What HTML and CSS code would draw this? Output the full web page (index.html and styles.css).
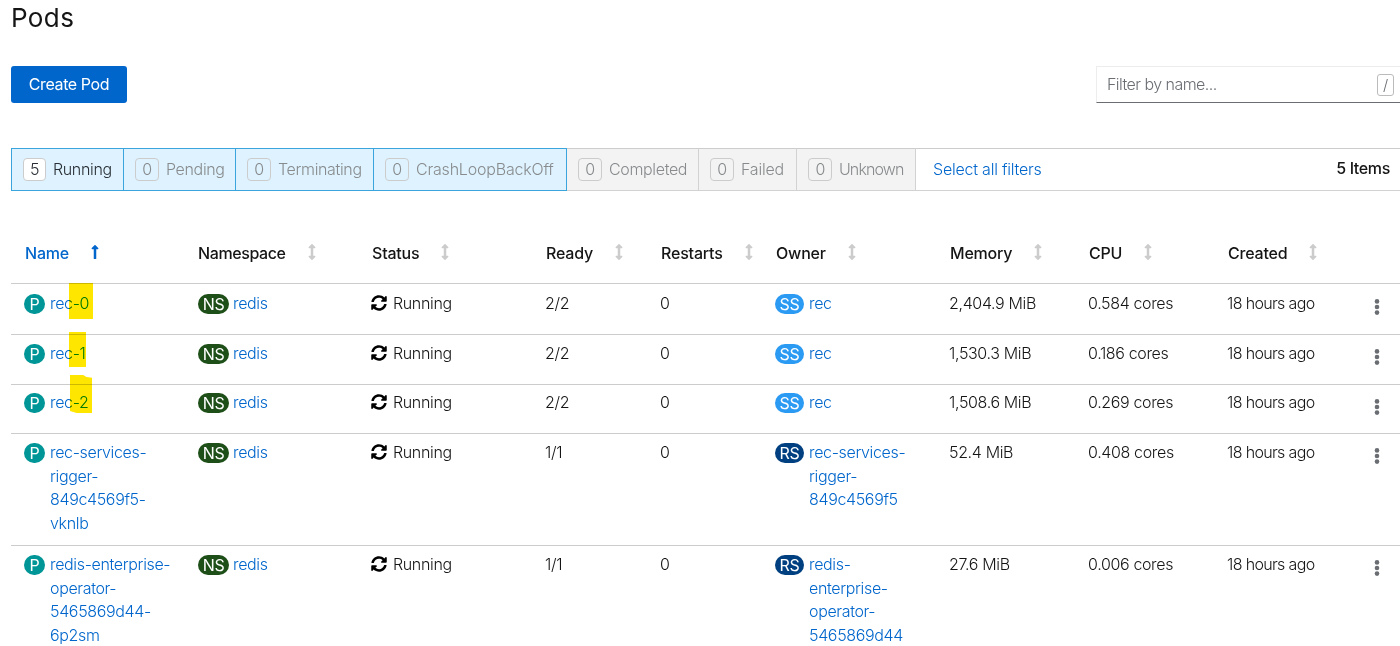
FILE: index.html
```
<!DOCTYPE html>
<html lang="en">
<head>
    <meta charset="UTF-8">
    <meta name="viewport" content="width=device-width, initial-scale=1.0">
    <title>Pods</title>
    <link rel="stylesheet" href="styles.css">
</head>
<body>
    <!-- Shared icons -->
    <svg class="icon-defs" width="0" height="0">
        <symbol id="sort" viewBox="0 0 256 512">
            <path d="M214.059 377.941H168V134.059h46.059c21.382 0 32.09-25.851 16.971-40.971L144.971 7.029c-9.373-9.373-24.568-9.373-33.941 0L24.971 93.088c-15.119 15.119-4.411 40.971 16.971 40.971H88v243.882H41.941c-21.382 0-32.09 25.851-16.971 40.971l86.059 86.059c9.373 9.373 24.568 9.373 33.941 0l86.059-86.059c15.12-15.119 4.412-40.971-16.97-40.971z"/>
        </symbol>
        <symbol id="sort-up" viewBox="0 0 256 512">
            <path d="M88 166.059V468c0 6.627 5.373 12 12 12h56c6.627 0 12-5.373 12-12V166.059h46.059c21.382 0 32.09-25.851 16.971-40.971l-86.059-86.059c-9.373-9.373-24.569-9.373-33.941 0l-86.059 86.059c-15.119 15.119-4.411 40.971 16.971 40.971H88z"/>
        </symbol>
        <symbol id="sync" viewBox="0 0 512 512">
            <path d="M370.72 133.28C339.458 104.008 298.888 87.962 255.848 88c-77.458.068-144.328 53.178-162.791 126.85-1.344 5.363-6.122 9.15-11.651 9.15H24.103c-7.498 0-13.194-6.807-11.807-14.176C33.933 94.924 134.813 8 256 8c66.448 0 126.791 26.136 171.315 68.685L463.03 40.97C478.149 25.851 504 36.559 504 57.941V192c0 13.255-10.745 24-24 24H345.941c-21.382 0-32.09-25.851-16.971-40.971l41.75-41.749zM32 296h134.059c21.382 0 32.09 25.851 16.971 40.971l-41.75 41.75c31.262 29.273 71.835 45.319 114.876 45.28 77.418-.07 144.315-53.144 162.787-126.849 1.344-5.363 6.122-9.15 11.651-9.15h57.304c7.498 0 13.194 6.807 11.807 14.176C478.067 417.076 377.187 504 256 504c-66.448 0-126.791-26.136-171.315-68.685L48.97 471.03C33.851 486.149 8 475.441 8 454.059V320c0-13.255 10.745-24 24-24z"/>
        </symbol>
        <symbol id="kebab" viewBox="0 0 6 18">
            <circle cx="3" cy="3.4" r="2.3"/>
            <circle cx="3" cy="9" r="2.3"/>
            <circle cx="3" cy="14.6" r="2.3"/>
        </symbol>
    </svg>

    <div class="page">
        <h1>Pods</h1>

        <div class="toolbar">
            <button class="create-button">Create Pod</button>
            <div class="search">
                <span class="search-text">Filter by name...</span>
                <kbd>/</kbd>
            </div>
        </div>

        <!-- Status filters -->
        <div class="filters">
            <div class="filter active has-items w-running"><span class="count">5</span><span>Running</span></div>
            <div class="filter active w-pending"><span class="count">0</span><span>Pending</span></div>
            <div class="filter active w-terminating"><span class="count">0</span><span>Terminating</span></div>
            <div class="filter active w-crash"><span class="count">0</span><span>CrashLoopBackOff</span></div>
            <div class="filter w-completed"><span class="count">0</span><span>Completed</span></div>
            <div class="filter w-failed"><span class="count">0</span><span>Failed</span></div>
            <div class="filter w-unknown"><span class="count">0</span><span>Unknown</span></div>
            <a class="select-all">Select all filters</a>
            <span class="total">5 Items</span>
        </div>

        <!-- Pod list -->
        <table>
            <colgroup>
                <col class="col-name"><col class="col-namespace"><col class="col-status"><col class="col-ready"><col class="col-restarts">
                <col class="col-owner"><col class="col-memory"><col class="col-cpu"><col class="col-created"><col>
            </colgroup>
            <thead>
                <tr>
                    <th class="sorted">Name<svg class="sort"><use href="#sort-up"/></svg></th>
                    <th class="wide">Namespace<svg class="sort"><use href="#sort"/></svg></th>
                    <th>Status<svg class="sort"><use href="#sort"/></svg></th>
                    <th>Ready<svg class="sort"><use href="#sort"/></svg></th>
                    <th>Restarts<svg class="sort"><use href="#sort"/></svg></th>
                    <th>Owner<svg class="sort"><use href="#sort"/></svg></th>
                    <th>Memory<svg class="sort"><use href="#sort"/></svg></th>
                    <th>CPU<svg class="sort"><use href="#sort"/></svg></th>
                    <th>Created<svg class="sort"><use href="#sort"/></svg></th>
                    <th></th>
                </tr>
            </thead>
            <tbody>
                <tr class="row-first">
                    <td><div class="resource"><span class="badge pod">P</span><a>rec<span class="marked">-0</span></a><i class="marker marker-0"></i></div></td>
                    <td><div class="resource"><span class="badge ns">NS</span><a>redis</a></div></td>
                    <td><div class="status"><svg><use href="#sync"/></svg>Running</div></td>
                    <td>2/2</td>
                    <td>0</td>
                    <td><div class="resource"><span class="badge ss">SS</span><a>rec</a></div></td>
                    <td>2,404.9 MiB</td>
                    <td>0.584 cores</td>
                    <td class="created">18 hours ago</td>
                    <td class="actions"><svg><use href="#kebab"/></svg></td>
                </tr>
                <tr class="row-second">
                    <td><div class="resource"><span class="badge pod">P</span><a>rec<span class="marked">-1</span></a><i class="marker marker-1"></i></div></td>
                    <td><div class="resource"><span class="badge ns">NS</span><a>redis</a></div></td>
                    <td><div class="status"><svg><use href="#sync"/></svg>Running</div></td>
                    <td>2/2</td>
                    <td>0</td>
                    <td><div class="resource"><span class="badge ss">SS</span><a>rec</a></div></td>
                    <td>1,530.3 MiB</td>
                    <td>0.186 cores</td>
                    <td class="created">18 hours ago</td>
                    <td class="actions"><svg><use href="#kebab"/></svg></td>
                </tr>
                <tr class="row-third">
                    <td><div class="resource"><span class="badge pod">P</span><a>rec<span class="marked">-2</span></a><i class="marker marker-2"></i></div></td>
                    <td><div class="resource"><span class="badge ns">NS</span><a>redis</a></div></td>
                    <td><div class="status"><svg><use href="#sync"/></svg>Running</div></td>
                    <td>2/2</td>
                    <td>0</td>
                    <td><div class="resource"><span class="badge ss">SS</span><a>rec</a></div></td>
                    <td>1,508.6 MiB</td>
                    <td>0.269 cores</td>
                    <td class="created">18 hours ago</td>
                    <td class="actions"><svg><use href="#kebab"/></svg></td>
                </tr>
                <tr class="row-tall">
                    <td><div class="resource"><span class="badge pod">P</span><a>rec-services-<br>rigger-<br>849c4569f5-<br>vknlb</a></div></td>
                    <td><div class="resource"><span class="badge ns">NS</span><a>redis</a></div></td>
                    <td><div class="status"><svg><use href="#sync"/></svg>Running</div></td>
                    <td>1/1</td>
                    <td>0</td>
                    <td><div class="resource"><span class="badge rs">RS</span><a>rec-services-<br>rigger-<br>849c4569f5</a></div></td>
                    <td>52.4 MiB</td>
                    <td>0.408 cores</td>
                    <td class="created">18 hours ago</td>
                    <td class="actions"><svg><use href="#kebab"/></svg></td>
                </tr>
                <tr class="row-tall">
                    <td><div class="resource"><span class="badge pod">P</span><a>redis-enterprise-<br>operator-<br>5465869d44-<br>6p2sm</a></div></td>
                    <td><div class="resource"><span class="badge ns">NS</span><a>redis</a></div></td>
                    <td><div class="status"><svg><use href="#sync"/></svg>Running</div></td>
                    <td>1/1</td>
                    <td>0</td>
                    <td><div class="resource"><span class="badge rs">RS</span><a>redis-<br>enterprise-<br>operator-<br>5465869d44</a></div></td>
                    <td>27.6 MiB</td>
                    <td>0.006 cores</td>
                    <td class="created">18 hours ago</td>
                    <td class="actions"><svg><use href="#kebab"/></svg></td>
                </tr>
            </tbody>
        </table>
    </div>
</body>
</html>
```
FILE: styles.css
```
* {
    box-sizing: border-box;
}

/* General Styling */
body {
    margin: 0;
    height: 646px;
    overflow: hidden;
    background: #fff;
    color: #151515;
    font-family: Inter, sans-serif;
    font-size: 16px;
    font-weight: 300;
    line-height: 23.5px;
    letter-spacing: -0.35px;
}

.icon-defs {
    position: absolute;
}

.page {
    padding-left: 11px;
}

h1 {
    margin: 0;
    height: 66px;
    padding-top: 2px;
    font-size: 26px;
    font-weight: 400;
    line-height: 32px;
    letter-spacing: 0.4px;
}

a {
    color: #06c;
}

/* Toolbar */
.toolbar {
    display: flex;
    justify-content: space-between;
    height: 82px;
}

.create-button {
    width: 116px;
    height: 37px;
    padding: 0;
    border: none;
    border-radius: 3px;
    background: #06c;
    color: #fff;
    font: inherit;
    font-weight: 400;
    letter-spacing: -0.4px;
}

.search {
    display: flex;
    align-items: center;
    justify-content: space-between;
    width: 304px;
    height: 37px;
    padding: 0 6px 0 10px;
    border: 1px solid #ededed;
    border-right: none;
    border-bottom-color: #6a6e73;
    color: #6a6e73;
}

.search-text {
    letter-spacing: -0.55px;
}

kbd {
    width: 17px;
    height: 22px;
    border: 1px solid #bbb;
    border-radius: 3px;
    font: inherit;
    font-size: 15px;
    line-height: 20px;
    text-align: center;
}

/* Status filters */
.filters {
    display: flex;
    height: 43px;
    border-top: 1px solid #ccc;
    border-bottom: 1px solid #d2d2d2;
}

.filter {
    display: flex;
    align-items: center;
    gap: 7px;
    margin: -1px 0;
    padding-left: 11px;
    border: 1px solid #d2d2d2;
    border-left: none;
    border-top-color: #ccc;
    background: #f3f3f3;
    color: #888b8d;
}

.filter.active {
    border-color: #39a5dc;
    background: #def3ff;
}

.filter.has-items {
    border-left: 1px solid #39a5dc;
    color: #292e34;
}

.count {
    flex: none;
    width: 24px;
    height: 23px;
    border: 1px solid #ccc;
    border-radius: 4px;
    line-height: 21px;
    text-align: center;
}

.has-items .count {
    width: 23px;
    background: #fff;
}

.w-running { width: 113px; }
.w-pending { width: 112px; }
.w-terminating { width: 138px; }
.w-crash { width: 193px; letter-spacing: -0.2px; }
.w-completed { width: 132px; }
.w-failed { width: 98px; letter-spacing: -0.2px; }
.w-unknown { width: 119px; letter-spacing: -0.9px; }

.select-all {
    padding: 9px 0 0 17px;
    letter-spacing: -0.22px;
}

.total {
    margin-left: auto;
    padding: 8px 10px 0 0;
    font-weight: 500;
}

/* Pod list */
table {
    width: 1389px;
    margin-top: 32px;
    table-layout: fixed;
    border-collapse: separate;
    border-spacing: 0;
}

.col-name { width: 173px; }
.col-namespace,
.col-status,
.col-owner { width: 174px; }
.col-ready { width: 115px; }
.col-restarts { width: 115px; }
.col-memory,
.col-cpu,
.col-created { width: 139px; }

th {
    height: 61px;
    padding: 1px 0 0 14px;
    border-bottom: 1px solid #ccc;
    font-weight: 500;
    letter-spacing: -0.2px;
    text-align: left;
    white-space: nowrap;
}

th.wide {
    letter-spacing: -0.4px;
}

.sort {
    width: 8px;
    height: 16px;
    margin-left: 22px;
    vertical-align: -1px;
    fill: #ccc;
}

.sorted,
.sorted .sort {
    color: #06c;
    fill: #06c;
}

td {
    padding: 7px 0 0 13px;
    border-bottom: 1px solid #ccc;
    vertical-align: top;
    white-space: nowrap;
}

.row-first td { height: 51px; padding-top: 8px; }
.row-second td { height: 50px; }
.row-third td { height: 49px; padding-top: 6px; }
.row-tall td { height: 112px; }

.created {
    letter-spacing: -0.65px;
}

.resource {
    position: relative;
    display: flex;
    align-items: flex-start;
    gap: 5px;
}

.badge {
    flex: none;
    height: 20px;
    margin-top: 2px;
    border-radius: 10px;
    color: #fff;
    font-weight: 400;
    line-height: 20px;
    text-align: center;
}

.pod { width: 21px; background: #009596; }
.ns { width: 31px; margin-left: 1px; margin-right: -1px; background: #1e4f18; }
.ss { width: 29px; background: #2b9af3; }
.rs { width: 29px; background: #004080; }

/* Yellow marker strokes over the pod index */
.marked {
    color: #0088cc;
}

.marker {
    position: absolute;
    background: #ffe600;
    mix-blend-mode: multiply;
}

.marker-0 {
    top: -9px;
    left: 45px;
    width: 24px;
    height: 36px;
}

.marker-1 {
    top: -10px;
    left: 45px;
    width: 17px;
    height: 35px;
}

.marker-2 {
    top: -16px;
    left: 46px;
    width: 22px;
    height: 38px;
    clip-path: polygon(0 0, 60% 0, 75% 5%, 100% 7%, 100% 100%, 30% 100%, 0 95%);
}

.status {
    display: flex;
    align-items: center;
    gap: 6px;
}

.status svg {
    width: 16px;
    height: 16px;
    margin-top: -1px;
}

td.actions {
    padding: 14px 0 0 21px;
}

.row-second td.actions,
.row-third td.actions,
.row-tall td.actions {
    padding-top: 13px;
}

.actions svg {
    display: block;
    width: 6px;
    height: 18px;
    fill: #6a6e73;
}
```
